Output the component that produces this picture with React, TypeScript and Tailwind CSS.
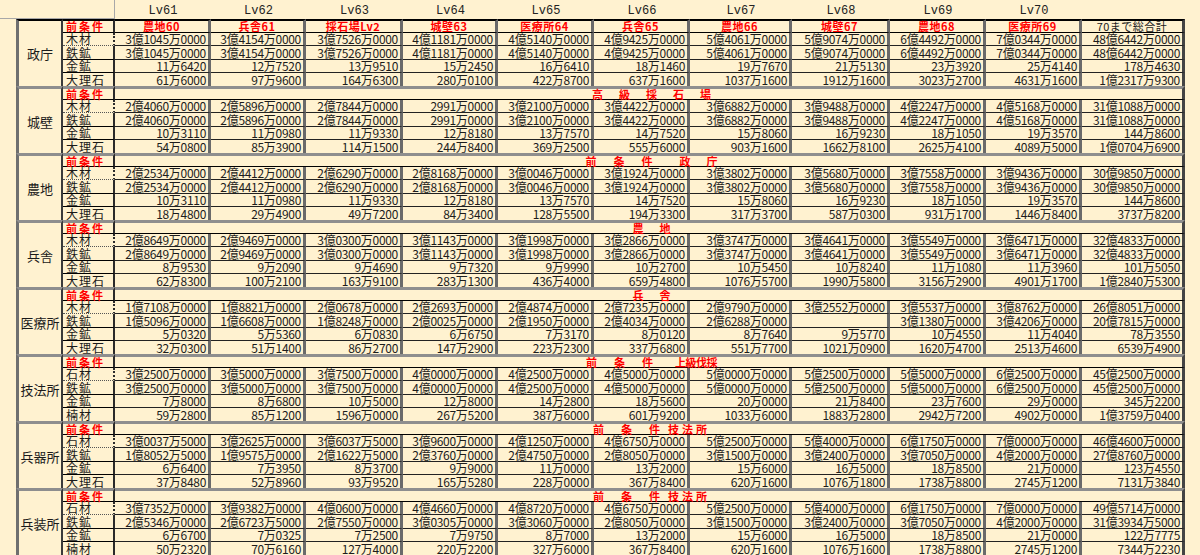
import React from 'react';

type Seg = [string, string];
interface Block {
  name: string;
  head: Seg[] | null;
  labels: string[];
  rows: string[][];
}

const LV_W = ['w-[96px]', 'w-[95px]', 'w-[97px]', 'w-[95px]', 'w-[96px]', 'w-[96px]', 'w-[102px]', 'w-[98px]', 'w-[96px]', 'w-[96px]'];

const FIRST_HEAD = ['農地60', '兵舎61', '採石場Lv2', '城壁63', '医療所64', '兵舎65', '農地66', '城壁67', '農地68', '医療所69'];

const g1 = ['3億1045万0000', '3億4154万0000', '3億7526万0000', '4億1181万0000', '4億5140万0000', '4億9425万0000', '5億4061万0000', '5億9074万0000', '6億4492万0000', '7億0344万0000', '48億6442万0000'];
const g2 = ['2億4060万0000', '2億5896万0000', '2億7844万0000', '2991万0000', '3億2100万0000', '3億4422万0000', '3億6882万0000', '3億9488万0000', '4億2247万0000', '4億5168万0000', '31億1088万0000'];
const gold2 = ['10万3110', '11万0980', '11万9330', '12万8180', '13万7570', '14万7520', '15万8060', '16万9230', '18万1050', '19万3570', '144万8600'];
const g3 = ['2億2534万0000', '2億4412万0000', '2億6290万0000', '2億8168万0000', '3億0046万0000', '3億1924万0000', '3億3802万0000', '3億5680万0000', '3億7558万0000', '3億9436万0000', '30億9850万0000'];
const g4 = ['2億8649万0000', '2億9469万0000', '3億0300万0000', '3億1143万0000', '3億1998万0000', '3億2866万0000', '3億3747万0000', '3億4641万0000', '3億5549万0000', '3億6471万0000', '32億4833万0000'];
const g6 = ['3億2500万0000', '3億5000万0000', '3億7500万0000', '4億0000万0000', '4億2500万0000', '4億5000万0000', '5億0000万0000', '5億2500万0000', '5億5000万0000', '6億2500万0000', '45億2500万0000'];

const L1 = ['木材', '鉄鉱', '金鉱', '大理石'];
const L2 = ['石材', '鉄鉱', '金鉱', '楠材'];
const L3 = ['石材', '鉄鉱', '金鉱', '大理石'];

const BLOCKS: Block[] = [
  {
    name: '政庁',
    head: null,
    labels: L1,
    rows: [
      g1,
      g1,
      ['11万6420', '12万7520', '13万9510', '15万2450', '16万6410', '18万1460', '19万7670', '21万5130', '23万3920', '25万4140', '178万4630'],
      ['61万6000', '97万9600', '164万6300', '280万0100', '422万8700', '637万1600', '1037万1600', '1912万1600', '3023万2700', '4631万1600', '1億2317万9300'],
    ],
  },
  {
    name: '城壁',
    head: [['高', ''], ['級', 'ml-[16px]'], ['採', 'ml-[16px]'], ['石', 'ml-[16px]'], ['場', 'ml-[16px]']],
    labels: L1,
    rows: [
      g2,
      g2,
      gold2,
      ['54万0800', '85万3900', '114万1500', '244万8400', '369万2500', '555万6000', '903万1600', '1662万8100', '2625万4100', '4089万5000', '1億0704万6900'],
    ],
  },
  {
    name: '農地',
    head: [['前', ''], ['条', 'ml-[17px]'], ['件', 'ml-[17px]'], ['政', 'ml-[27px]'], ['庁', 'ml-[16px]']],
    labels: L1,
    rows: [
      g3,
      g3,
      gold2,
      ['18万4800', '29万4900', '49万7200', '84万3400', '128万5500', '194万3300', '317万3700', '587万0300', '931万1700', '1446万8400', '3737万8200'],
    ],
  },
  {
    name: '兵舎',
    head: [['農', ''], ['地', 'ml-[16px]']],
    labels: L1,
    rows: [
      g4,
      g4,
      ['8万9530', '9万2090', '9万4690', '9万7320', '9万9990', '10万2700', '10万5450', '10万8240', '11万1080', '11万3960', '101万5050'],
      ['62万8300', '100万2100', '163万9100', '283万1300', '436万4000', '659万4800', '1076万5700', '1990万5800', '3156万2900', '4901万1700', '1億2840万5300'],
    ],
  },
  {
    name: '医療所',
    head: [['兵', ''], ['舎', 'ml-[16px]']],
    labels: L1,
    rows: [
      ['1億7108万0000', '1億8821万0000', '2億0678万0000', '2億2693万0000', '2億4874万0000', '2億7235万0000', '2億9790万0000', '3億2552万0000', '3億5537万0000', '3億8762万0000', '26億8051万0000'],
      ['1億5096万0000', '1億6608万0000', '1億8248万0000', '2億0025万0000', '2億1950万0000', '2億4034万0000', '2億6288万0000', '', '3億1380万0000', '3億4206万0000', '20億7815万0000'],
      ['5万0320', '5万5360', '6万0830', '6万6750', '7万3170', '8万0120', '8万7640', '9万5770', '10万4550', '11万4040', '78万3550'],
      ['32万0300', '51万1400', '86万2700', '147万2900', '223万2300', '337万6800', '551万7700', '1021万0900', '1620万4700', '2513万4600', '6539万4900'],
    ],
  },
  {
    name: '技法所',
    head: [['前', ''], ['条', 'ml-[17px]'], ['件', 'ml-[17px]'], ['上級伐採', 'ml-[22px] tracking-[-0.5px]']],
    labels: L2,
    rows: [
      g6,
      g6,
      ['7万8000', '8万6800', '10万5000', '12万8000', '14万2800', '18万5600', '20万0000', '21万8400', '23万7600', '29万0000', '345万2200'],
      ['59万2800', '85万1200', '1596万0000', '267万5200', '387万6000', '601万9200', '1033万6000', '1883万2800', '2942万7200', '4902万0000', '1億3759万0400'],
    ],
  },
  {
    name: '兵器所',
    head: [['前', ''], ['条', 'ml-[17px]'], ['件', 'ml-[17px]'], ['技法所', 'ml-[8px] tracking-[3px]']],
    labels: L3,
    rows: [
      ['3億0037万5000', '3億2625万0000', '3億6037万5000', '3億9600万0000', '4億1250万0000', '4億6750万0000', '5億2500万0000', '5億4000万0000', '6億1750万0000', '7億0000万0000', '46億4600万0000'],
      ['1億8052万5000', '1億9575万0000', '2億1622万5000', '2億3760万0000', '2億4750万0000', '2億8050万0000', '3億1500万0000', '3億2400万0000', '3億7050万0000', '4億2000万0000', '27億8760万0000'],
      ['6万6400', '7万3950', '8万3700', '9万9000', '11万0000', '13万2000', '15万6000', '16万5000', '18万8500', '21万0000', '123万4550'],
      ['37万8480', '52万8960', '93万9520', '165万5280', '228万0000', '367万8400', '620万1600', '1076万1800', '1738万8800', '2745万1200', '7131万3840'],
    ],
  },
  {
    name: '兵装所',
    head: [['前', ''], ['条', 'ml-[17px]'], ['件', 'ml-[17px]'], ['技法所', 'ml-[8px] tracking-[3px]']],
    labels: L2,
    rows: [
      ['3億7352万0000', '3億9382万0000', '4億0600万0000', '4億4660万0000', '4億8720万0000', '4億6750万0000', '5億2500万0000', '5億4000万0000', '6億1750万0000', '7億0000万0000', '49億5714万0000'],
      ['2億5346万0000', '2億6723万5000', '2億7550万0000', '3億0305万0000', '3億3060万0000', '2億8050万0000', '3億1500万0000', '3億2400万0000', '3億7050万0000', '4億2000万0000', '31億3934万5000'],
      ['6万6700', '7万0325', '7万2500', '7万9750', '8万7000', '13万2000', '15万6000', '16万5000', '18万8500', '21万0000', '122万7775'],
      ['50万2320', '70万6160', '127万4000', '220万2200', '327万6000', '367万8400', '620万1600', '1076万1600', '1738万8800', '2745万1200', '7344万2230'],
    ],
  },
];

function BlockView({ b, idx }: { b: Block; idx: number }) {
  const first = idx === 0;
  const topB = first ? 'border-t-2 border-t-black' : 'border-t-[3px] border-t-[#8e8e8e]';
  const cells: React.ReactNode[] = [];
  cells.push(
    <div
      key="name"
      className={`row-span-5 flex items-center justify-center border-l-[3px] border-l-[#6f6f6f] border-r-2 border-r-[#3a3a3a] text-[13px] leading-none text-[#1a1a1a] ${topB}`}
    >
      {b.name}
    </div>
  );
  cells.push(
    <div
      key="pl"
      className={`flex items-center pl-[3px] border-r-2 border-r-[#2a2a2a] border-b border-b-black text-[11px] font-bold leading-none tracking-[2px] text-[#ff0000] ${topB}`}
    >
      前条件
    </div>
  );
  if (first) {
    FIRST_HEAD.forEach((h, i) => {
      cells.push(
        <div
          key={'h' + i}
          className={`flex items-center justify-center border-r-[3px] border-r-[#6a6a6a] border-b border-b-black text-[11px] font-bold leading-none tracking-[0.5px] text-[#ff0000] ${topB}`}
        >
          {h}
        </div>
      );
    });
    cells.push(
      <div
        key="htot"
        className={`flex items-center justify-center border-r-[3px] border-r-[#444] border-b border-b-black text-[11px] leading-none tracking-[0.5px] text-[#1a1a1a] ${topB}`}
      >
        70まで総合計
      </div>
    );
  } else {
    cells.push(
      <div
        key="hm"
        className={`col-span-11 flex items-center justify-center pl-[6px] border-r-[3px] border-r-[#444] border-b border-b-black text-[11px] font-bold leading-none text-[#ff0000] ${topB}`}
      >
        {b.head!.map((s, i) => (
          <span key={i} className={s[1]}>
            {s[0]}
          </span>
        ))}
      </div>
    );
  }
  b.rows.forEach((row, r) => {
    const last = r === 3;
    const lb = last ? '' : r === 0 ? 'border-b border-dotted border-b-[#555]' : 'border-b border-b-black';
    cells.push(
      <div
        key={'l' + r}
        className={`flex items-center pl-[3px] border-r-2 border-r-[#2a2a2a] text-[12px] leading-none tracking-[1px] text-[#1a1a1a] ${lb}`}
      >
        {b.labels[r]}
      </div>
    );
    const db = last ? '' : 'border-b border-b-[#222]';
    row.forEach((v, c) => {
      cells.push(
        <div
          key={'d' + r + '_' + c}
          className={`flex items-center justify-end pr-[2px] border-r-[3px] ${c === 10 ? 'border-r-[#444]' : 'border-r-[#6a6a6a]'} text-[12px] leading-none tracking-[-0.3px] text-[#1c1c1c] ${db}`}
        >
          {v}
        </div>
      );
    });
  });
  return <>{cells}</>;
}

export default function App() {
  return (
    <div className="w-[1200px] h-[555px] overflow-hidden bg-[#fff2d0] font-['Noto_Sans_CJK_JP','Noto_Sans',sans-serif]">
      <div className="flex h-[19px]">
        <div className="w-[115px] h-[19px] border-r border-b border-[#a8a8a8]" />
        {LV_W.map((w, i) => (
          <div
            key={i}
            className={`${w} h-[19px] flex items-end justify-center pb-[2px] font-['Liberation_Mono',monospace] text-[12px] leading-none text-[#222]`}
          >
            Lv{61 + i}
          </div>
        ))}
      </div>
      <div className="ml-[16px] w-[1169px] grid grid-cols-[47px_52px_96px_95px_97px_95px_96px_96px_102px_98px_96px_96px_103px] grid-rows-[repeat(8,14px_13px_14px_13px_13px)]">
        {BLOCKS.map((b, i) => (
          <BlockView key={i} b={b} idx={i} />
        ))}
      </div>
    </div>
  );
}
